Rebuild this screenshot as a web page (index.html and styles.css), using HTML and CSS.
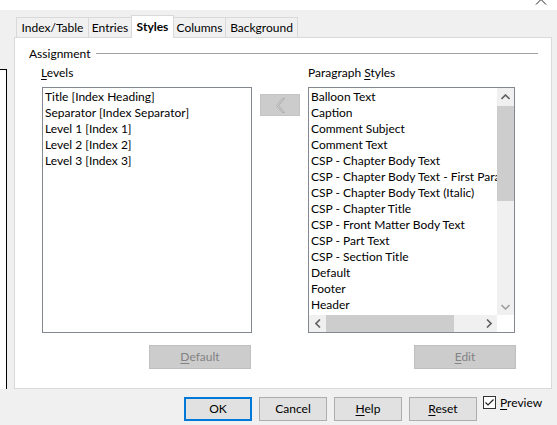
FILE: index.html
```html
<!DOCTYPE html>
<html>
<head>
<meta charset="utf-8">
<link rel="stylesheet" href="styles.css">
</head>
<body>
<div class="window">
  <div class="titlebar">
    <svg class="close" width="12" height="5" viewBox="0 0 12 5"><path d="M1 4.5 L6 -0.5 L11 4.5" fill="none" stroke="#222" stroke-width="1"/></svg>
  </div>
  <div class="body">
    <div class="behind"></div>
    <div class="tabctl">
      <div class="tabs">
        <div class="tab t1">Index/Table</div>
        <div class="tab t2">Entries</div>
        <div class="tab t3 active">Styles</div>
        <div class="tab t4">Columns</div>
        <div class="tab t5">Background</div>
      </div>
      <div class="panel">
        <div class="frame-head"><span class="frame-title">Assignment</span><div class="rule"></div></div>
        <div class="cols">
          <div class="col col-left">
            <div class="lbl"><u>L</u>evels</div>
            <div class="listbox lb-left">
              <div class="item">Title [Index Heading]</div>
              <div class="item">Separator [Index Separator]</div>
              <div class="item">Level 1 [Index 1]</div>
              <div class="item">Level 2 [Index 2]</div>
              <div class="item">Level 3 [Index 3]</div>
            </div>
            <div class="btn disabled btn-default"><span><u>D</u>efault</span></div>
          </div>
          <div class="mid">
            <div class="movebtn">
              <svg width="11" height="15" viewBox="0 0 11 15"><path d="M7.5 0.5 L1.5 7.5 L7.5 14.5 L9.5 14.5 L3.5 7.5 L9.5 0.5 Z" fill="#d6d6d6" stroke="#aaaaaa" stroke-width="1" stroke-linejoin="miter"/></svg>
            </div>
          </div>
          <div class="col col-right">
            <div class="lbl">Paragraph <u>S</u>tyles</div>
            <div class="listbox lb-right">
              <div class="lb-content">
                <div class="item">Balloon Text</div>
                <div class="item">Caption</div>
                <div class="item">Comment Subject</div>
                <div class="item">Comment Text</div>
                <div class="item">CSP - Chapter Body Text</div>
                <div class="item">CSP - Chapter Body Text - First Paragraph</div>
                <div class="item">CSP - Chapter Body Text (Italic)</div>
                <div class="item">CSP - Chapter Title</div>
                <div class="item">CSP - Front Matter Body Text</div>
                <div class="item">CSP - Part Text</div>
                <div class="item">CSP - Section Title</div>
                <div class="item">Default</div>
                <div class="item">Footer</div>
                <div class="item">Header</div>
              </div>
              <div class="vscroll">
                <div class="sb-arrow"><svg width="9" height="6" viewBox="0 0 9 6"><path d="M0.5 5 L4.5 1 L8.5 5" fill="none" stroke="#606060" stroke-width="1.6"/></svg></div>
                <div class="vtrack"><div class="vthumb"></div></div>
                <div class="sb-arrow"><svg width="9" height="6" viewBox="0 0 9 6"><path d="M0.5 1 L4.5 5 L8.5 1" fill="none" stroke="#a0a0a0" stroke-width="1.6"/></svg></div>
              </div>
              <div class="hscroll">
                <div class="sb-arrow"><svg width="6" height="9" viewBox="0 0 6 9"><path d="M5 0.5 L1 4.5 L5 8.5" fill="none" stroke="#606060" stroke-width="1.6"/></svg></div>
                <div class="htrack"><div class="hthumb"></div></div>
                <div class="sb-arrow"><svg width="6" height="9" viewBox="0 0 6 9"><path d="M1 0.5 L5 4.5 L1 8.5" fill="none" stroke="#606060" stroke-width="1.6"/></svg></div>
              </div>
              <div class="corner"></div>
            </div>
            <div class="btn disabled btn-edit"><span><u>E</u>dit</span></div>
          </div>
        </div>
      </div>
      <div class="footer">
        <div class="btn btn-ok">OK</div>
        <div class="btn">Cancel</div>
        <div class="btn"><span><u>H</u>elp</span></div>
        <div class="btn"><span><u>R</u>eset</span></div>
        <div class="check">
          <span class="box"><svg width="11" height="11" viewBox="0 0 11 11"><path d="M1.5 5.5 L4 8 L9.5 2.5" fill="none" stroke="#222" stroke-width="1.2"/></svg></span>
          <span class="check-label"><u>P</u>review</span>
        </div>
      </div>
    </div>
  </div>
</div>
</body>
</html>
```

FILE: styles.css
```css
* { box-sizing: border-box; }
html, body { margin: 0; padding: 0; }
body {
  width: 557px;
  height: 425px;
  overflow: hidden;
  background: #f0f0f0;
  font-family: Lato, "Noto Sans", sans-serif;
  font-size: 12px;
  color: #000;
}
u { text-decoration: underline; text-underline-offset: 2px; text-decoration-thickness: 1px; }

.window { position: relative; width: 557px; height: 425px; }
.titlebar { height: 10px; background: #fff; position: relative; }
.close { position: absolute; left: 535px; top: 0; }

.body { display: flex; align-items: flex-start; }
.behind {
  width: 7px;
  height: 320px;
  margin-top: 59px;
  background: #fff;
  border-top: 1px solid #000;
  border-right: 1px solid #000;
}
.tabctl { margin-left: 7px; width: 538px; }

.tabs {
  height: 27px;
  padding-top: 5px;
  padding-left: 2px;
  display: flex;
  align-items: flex-end;
}
.tab {
  height: 20px;
  line-height: 19px;
  border: 1px solid #d9d9d9;
  border-bottom: none;
  background: #f0f0f0;
  margin-right: -1px;
  text-align: center;
  white-space: nowrap;
}
.t1 { width: 73px; }
.t2 { width: 44px; }
.t3 { width: 43px; }
.t4 { width: 53px; }
.t5 { width: 73px; }
.tab.active {
  height: 23px;
  line-height: 21px;
  background: #fff;
  font-weight: bold;
  margin-bottom: -1px;
  position: relative;
  z-index: 1;
  padding-bottom: 2px;
}

.panel {
  height: 352px;
  border: 1px solid #d9d9d9;
  background: #fff;
}
.frame-head {
  margin-top: 8px;
  padding-left: 14px;
  height: 16px;
  line-height: 16px;
  display: flex;
  align-items: center;
}
.rule {
  flex: 1;
  height: 1px;
  background: #a0a0a0;
  margin-left: 6px;
  margin-right: 13px;
  margin-top: -1px;
}
.cols {
  display: flex;
  margin-top: 3px;
  padding-left: 27px;
}
.col { display: flex; flex-direction: column; }
.col-left { width: 210px; }
.col-right { width: 207px; }
.lbl { height: 16px; line-height: 16px; margin-bottom: 6px; }
.col-left .lbl { margin-left: -1px; }

.listbox {
  height: 246px;
  border: 1px solid #828790;
  background: #fff;
  overflow: hidden;
}
.lb-left { padding: 1px 0 0 2px; }
.item { height: 16px; line-height: 16px; white-space: nowrap; }

.lb-right {
  display: grid;
  grid-template-columns: 188px 17px;
  grid-template-rows: 227px 17px;
}
.lb-content { padding: 1px 0 0 2px; overflow: hidden; }
.vscroll { display: flex; flex-direction: column; background: #f0f0f0; }
.sb-arrow {
  width: 17px;
  height: 17px;
  display: flex;
  align-items: center;
  justify-content: center;
  flex: none;
}
.vtrack { flex: 1; padding: 1px 0; }
.vthumb { width: 17px; height: 95px; background: #cdcdcd; }
.hscroll { display: flex; background: #f0f0f0; }
.htrack { flex: 1; display: flex; }
.hthumb { width: 128px; height: 17px; background: #cdcdcd; }
.corner { background: #fff; }

.mid { width: 56px; padding: 29px 8px 0 8px; }
.movebtn {
  width: 40px;
  height: 22px;
  background: #cccccc;
  border: 1px solid #c4c4c4;
  display: flex;
  align-items: center;
  justify-content: center;
}

.btn {
  width: 68px;
  height: 24px;
  background: #e1e1e1;
  border: 1px solid #adadad;
  display: flex;
  align-items: center;
  justify-content: center;
  line-height: 16px;
}
.btn.disabled {
  background: #cccccc;
  border-color: #bfbfbf;
  color: #838383;
  width: 102px;
  margin-top: 12px;
  align-self: flex-end;
}
.btn-default { margin-right: 1px; }
.btn-edit { margin-right: -1px; }
.btn-ok { border: 2px solid #0078d7; }

.footer {
  display: flex;
  align-items: flex-start;
  margin-top: 8px;
  padding-left: 170px;
  gap: 7px;
}
.check { display: flex; align-items: center; margin-left: -1px; margin-top: -1px; height: 13px; }
.box {
  width: 13px;
  height: 13px;
  border: 1px solid #333;
  background: #fff;
  display: flex;
  align-items: center;
  justify-content: center;
}
.check-label { margin-left: 4px; line-height: 16px; }
```
